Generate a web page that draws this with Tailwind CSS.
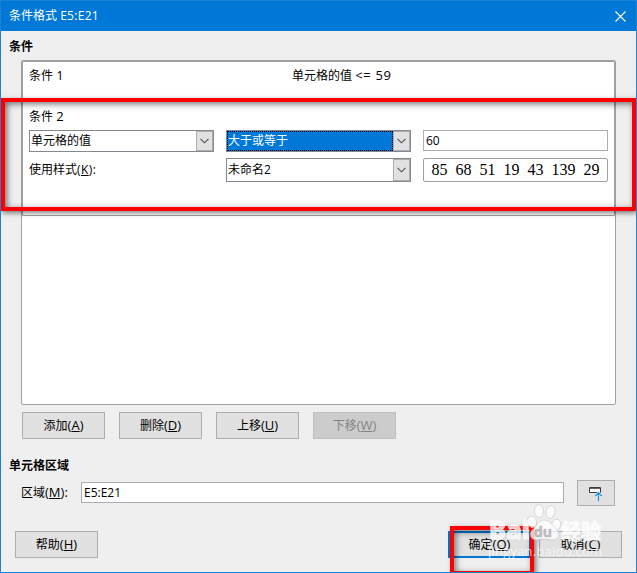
<!DOCTYPE html>
<html lang="zh-CN">
<head>
<meta charset="utf-8">
<title>条件格式</title>
<script src="https://cdn.jsdelivr.net/npm/@tailwindcss/browser@4"></script>
</head>
<body class="w-[637px] h-[573px] overflow-hidden">
<div class="relative w-[637px] h-[573px] overflow-hidden border border-[#1f82d0] bg-[#efefef] text-[12px] leading-[16px] text-black font-['Open_Sans','Noto_Sans_CJK_SC',sans-serif] flex flex-col whitespace-nowrap">
  <header class="h-[30px] shrink-0 bg-[#0078d7] text-white flex items-center justify-between pl-2 pr-[10px]">
    <span>条件格式 <span class="tracking-[.3px]">E5:E21</span></span>
    <svg class="w-[11px] h-[11px]" viewBox="0 0 11 11" fill="none" stroke="#fff" stroke-width="1.1"><path d="M.5.5l10 10M10.5.5l-10 10"/></svg>
  </header>
  <h2 class="h-[29px] shrink-0 pl-2 pt-[8px] font-bold">条件</h2>

  <section class="ml-5 w-[595px] h-[345px] shrink-0 bg-white border border-[#a0a0a0] rounded-[2px] flex flex-col">
    <div class="h-[155px] border border-[#a0a0a0] rounded-[1px] flex flex-col">
      <div class="h-[41px] pt-[5px] pl-[6px] flex">
        <span class="w-[263px]">条件 <span class="text-[13px]">1</span></span><span>单元格的值 <span class="text-[13px] tracking-[.7px]">&lt;= 59</span></span>
      </div>
      <div class="pt-[5px] pl-[6px]">
        <div class="h-[22px]">条件 <span class="text-[13px]">2</span></div>
        <div class="flex gap-3">
          <div class="w-[185px] h-[22px] border border-[#838991] flex">
            <span class="grow pl-px leading-[19px]">单元格的值</span>
            <span class="w-[17px] border border-[#adadad] bg-[#e1e1e1] flex items-center justify-center"><svg class="w-[9px] h-[6px]" viewBox="0 0 9 6" fill="none" stroke="#505050" stroke-width="1.1"><path d="M.5.8l4 4 4-4"/></svg></span>
          </div>
          <div class="w-[185px] h-[22px] border border-[#838991] flex">
            <span class="grow pl-px leading-[20px] bg-[#0078d7] text-white outline-1 outline-dotted outline-black -outline-offset-1">大于或等于</span>
            <span class="w-[17px] border border-[#adadad] bg-[#e1e1e1] flex items-center justify-center"><svg class="w-[9px] h-[6px]" viewBox="0 0 9 6" fill="none" stroke="#505050" stroke-width="1.1"><path d="M.5.8l4 4 4-4"/></svg></span>
          </div>
          <div class="w-[185px] h-[21px] border border-[#abadb3] pl-[2px] leading-[20px]">60</div>
        </div>
        <div class="flex gap-3 mt-[6px]">
          <span class="w-[185px] leading-[23px]">使用样式<span class="tracking-[.4px]">(<u>K</u>):</span></span>
          <div class="w-[185px] h-[24px] border border-[#838991] flex">
            <span class="grow pl-px leading-[21px]">未命名2</span>
            <span class="w-[17px] border border-[#adadad] bg-[#e1e1e1] flex items-center justify-center"><svg class="w-[9px] h-[6px]" viewBox="0 0 9 6" fill="none" stroke="#505050" stroke-width="1.1"><path d="M.5.8l4 4 4-4"/></svg></span>
          </div>
          <div class="w-[185px] h-[24px] border border-[#a0a0a0] rounded-[2px] flex justify-center items-center text-[16px] font-['Liberation_Serif',serif]"><span class="[word-spacing:4px]">85 68 51 19 43 139 29</span></div>
        </div>
      </div>
    </div>
  </section>

  <div class="flex gap-[14px] pl-[21px] mt-[7px] shrink-0">
    <button class="w-[83px] h-[27px] border border-[#adadad] bg-[#e1e1e1]">添加<span class="text-[13px]">(<u>A</u>)</span></button>
    <button class="w-[83px] h-[27px] border border-[#adadad] bg-[#e1e1e1]">删除<span class="text-[13px]">(<u>D</u>)</span></button>
    <button class="w-[83px] h-[27px] border border-[#adadad] bg-[#e1e1e1]">上移<span class="text-[13px]">(<u>U</u>)</span></button>
    <button class="w-[83px] h-[27px] border border-[#bfbfbf] bg-[#cccccc] text-[#838383]">下移<span class="text-[13px]">(<u>W</u>)</span></button>
  </div>
  <h2 class="mt-[19px] h-[22px] shrink-0 pl-2 font-bold">单元格区域</h2>
  <div class="flex items-start pl-5 shrink-0">
    <span class="w-[60px] mt-[4px]">区域<span class="text-[13px]">(<u>M</u>):</span></span>
    <div class="w-[483px] h-[21px] mt-[2px] border border-[#abadb3] bg-white pl-[2px] leading-[20px]">E5:E21</div>
    <button class="w-[38px] h-[26px] ml-[13px] border border-[#adadad] bg-[#e1e1e1] flex justify-center items-center"><svg class="w-[14px] h-[15px]" viewBox="0 0 14 15" fill="none"><path d="M1 1h11v6H1z" fill="#fff"/><path d="M.5 1.5h11v5H.5z" stroke="#3d3b3b"/><path d="M1 2.5h10" stroke="#666"/><path d="M9.5 15V6.5M6 10l3.5-3.5L13 10" stroke="#e8f1f7" stroke-width="2"/><path d="M9.5 15V6.8M6.2 10l3.3-3.2L12.8 10" stroke="#1e8bcd" stroke-width="1.2"/></svg></button>
  </div>
  <footer class="flex mt-[25px] pl-[14px] shrink-0">
    <button class="w-[83px] h-[27px] border border-[#adadad] bg-[#e1e1e1]">帮助<span class="text-[13px]">(<u>H</u>)</span></button>
    <button class="w-[83px] h-[27px] ml-[350px] border-2 border-[#0078d7] bg-[#e1e1e1]">确定<span class="text-[13px]">(<u>O</u>)</span></button>
    <button class="w-[83px] h-[27px] ml-[8px] border border-[#adadad] bg-[#e1e1e1]">取消<span class="text-[13px]">(<u>C</u>)</span></button>
  </footer>

  <div class="absolute left-0 top-[97px] w-[635px] h-[113px] border-4 border-[#fe0000] shadow-[1px_2px_5px_0px_rgba(0,0,0,.5),inset_2px_2px_6px_0px_rgba(0,0,0,.55)]"></div>
  <div class="absolute left-[449px] top-[525px] w-[84px] h-[48px] border-4 border-b-3 border-[#fe0000] shadow-[2px_2px_5px_0px_rgba(0,0,0,.5),inset_2px_2px_6px_0px_rgba(0,0,0,.5)]"></div>

  <svg class="absolute left-[479px] top-[494px] w-[130px] h-[77px] font-['Open_Sans','Noto_Sans_CJK_SC',sans-serif]" viewBox="0 0 130 77" fill="#fff" fill-opacity=".75" stroke="#888" stroke-opacity=".45" stroke-width=".6">
    <ellipse cx="59" cy="16" rx="4.5" ry="6.5"/>
    <ellipse cx="70.5" cy="17" rx="4.5" ry="6.5" transform="rotate(10 70.5 17)"/>
    <ellipse cx="52" cy="27" rx="4.5" ry="6" transform="rotate(-15 52 27)"/>
    <ellipse cx="76" cy="30" rx="4.5" ry="6" transform="rotate(20 76 30)"/>
    <path d="M64 25c-5 0-7 6-12 10-4 4-1 10 4 10 4 0 5-1 8-1s5 1 9 1c6 0 8-6 4-10-4-4-7-10-13-10z"/>
    <g stroke="#fff" stroke-opacity=".75" stroke-width="1">
      <text x="9" y="44" font-size="25" font-weight="800" textLength="41" lengthAdjust="spacingAndGlyphs">Bai</text>
      <text x="81" y="44" font-size="20" font-weight="700">经验</text>
    </g>
    <text x="54" y="42" font-size="14" font-weight="700" fill="#b0b0b0">du</text>
    <text x="8" y="61" font-size="13" fill-opacity=".7" stroke="none" textLength="114">jingyan.baidu.com</text>
  </svg>
</div>
</body>
</html>
